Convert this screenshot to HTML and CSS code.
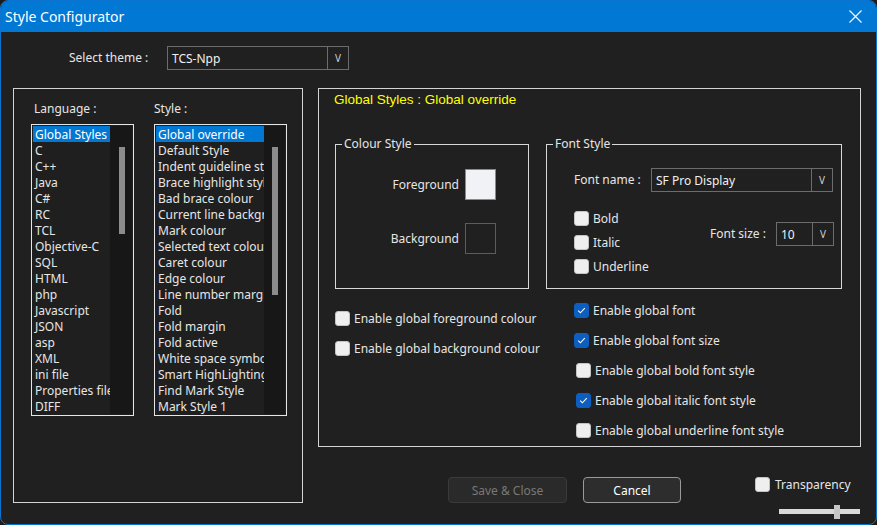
FILE: index.html
```html
<!DOCTYPE html>
<html>
<head>
<meta charset="utf-8">
<title>Style Configurator</title>
<link rel="stylesheet" href="styles.css">
</head>
<body>
<div class="window">
  <div class="titlebar">
    <span class="title">Style Configurator</span>
    <svg class="close" width="13" height="13" viewBox="0 0 13 13"><path d="M0.5 0.5 L12.5 12.5 M12.5 0.5 L0.5 12.5" stroke="#ffffff" stroke-width="1.1" fill="none"/></svg>
  </div>
  <div class="content">
    <div class="theme-row">
      <span class="theme-label">Select theme :</span>
      <div class="combo theme-combo"><span class="combo-text">TCS-Npp</span><span class="combo-arrow">V</span></div>
    </div>
    <div class="main">
      <div class="group-left">
        <div class="list-col">
          <div class="list-label lang-label">Language :</div>
          <div class="listbox lang-list">
            <div class="items">
              <div class="item selected">Global Styles</div>
              <div class="item">C</div>
              <div class="item">C++</div>
              <div class="item">Java</div>
              <div class="item">C#</div>
              <div class="item">RC</div>
              <div class="item">TCL</div>
              <div class="item">Objective-C</div>
              <div class="item">SQL</div>
              <div class="item">HTML</div>
              <div class="item">php</div>
              <div class="item">Javascript</div>
              <div class="item">JSON</div>
              <div class="item">asp</div>
              <div class="item">XML</div>
              <div class="item">ini file</div>
              <div class="item">Properties file</div>
              <div class="item">DIFF</div>
            </div>
            <div class="scroll"><div class="thumb lang-thumb"></div></div>
          </div>
        </div>
        <div class="list-col">
          <div class="list-label">Style :</div>
          <div class="listbox style-list">
            <div class="items">
              <div class="item selected">Global override</div>
              <div class="item">Default Style</div>
              <div class="item">Indent guideline style</div>
              <div class="item">Brace highlight style</div>
              <div class="item">Bad brace colour</div>
              <div class="item">Current line background colour</div>
              <div class="item">Mark colour</div>
              <div class="item">Selected text colour</div>
              <div class="item">Caret colour</div>
              <div class="item">Edge colour</div>
              <div class="item">Line number margin</div>
              <div class="item">Fold</div>
              <div class="item">Fold margin</div>
              <div class="item">Fold active</div>
              <div class="item">White space symbol</div>
              <div class="item">Smart HighLighting</div>
              <div class="item">Find Mark Style</div>
              <div class="item">Mark Style 1</div>
            </div>
            <div class="scroll"><div class="thumb style-thumb"></div></div>
          </div>
        </div>
      </div>
      <div class="right-col">
        <div class="group-right">
          <div class="group-title">Global Styles : Global override</div>
          <div class="fieldsets">
            <fieldset class="fs colour-fs">
              <legend>Colour Style</legend>
              <div class="colour-grid">
                <span class="swatch-label">Foreground</span><span class="swatch fg"></span>
                <span class="swatch-label">Background</span><span class="swatch bg"></span>
              </div>
            </fieldset>
            <fieldset class="fs font-fs">
              <legend>Font Style</legend>
              <div class="font-body">
                <div class="font-name-row">
                  <span class="fn-label">Font name :</span>
                  <div class="combo fn-combo"><span class="combo-text">SF Pro Display</span><span class="combo-arrow">V</span></div>
                </div>
                <div class="font-row2">
                  <div class="checks">
                    <label class="check-row"><span class="cb"></span><span>Bold</span></label>
                    <label class="check-row"><span class="cb"></span><span>Italic</span></label>
                    <label class="check-row"><span class="cb"></span><span>Underline</span></label>
                  </div>
                  <div class="font-size">
                    <span class="fs-label">Font size :</span>
                    <div class="combo fsz-combo"><span class="combo-text">10</span><span class="combo-arrow">V</span></div>
                  </div>
                </div>
              </div>
            </fieldset>
          </div>
          <div class="enables">
            <div class="en-left">
              <label class="en-row"><span class="cb"></span><span>Enable global foreground colour</span></label>
              <label class="en-row"><span class="cb"></span><span>Enable global background colour</span></label>
            </div>
            <div class="en-right">
              <label class="en-row"><span class="cb checked"><svg width="15" height="15" viewBox="0 0 15 15"><path d="M4.2 7.6 L6.4 9.8 L10.8 5.2" stroke="#ffffff" stroke-width="1.1" fill="none"/></svg></span><span>Enable global font</span></label>
              <label class="en-row"><span class="cb checked"><svg width="15" height="15" viewBox="0 0 15 15"><path d="M4.2 7.6 L6.4 9.8 L10.8 5.2" stroke="#ffffff" stroke-width="1.1" fill="none"/></svg></span><span>Enable global font size</span></label>
              <label class="en-row shift"><span class="cb"></span><span>Enable global bold font style</span></label>
              <label class="en-row shift"><span class="cb checked"><svg width="15" height="15" viewBox="0 0 15 15"><path d="M4.2 7.6 L6.4 9.8 L10.8 5.2" stroke="#ffffff" stroke-width="1.1" fill="none"/></svg></span><span>Enable global italic font style</span></label>
              <label class="en-row shift"><span class="cb"></span><span>Enable global underline font style</span></label>
            </div>
          </div>
        </div>
        <div class="bottom-row">
          <button class="btn btn-disabled">Save &amp; Close</button>
          <button class="btn btn-cancel">Cancel</button>
          <div class="transp">
            <label class="transp-row"><span class="cb"></span><span>Transparency</span></label>
            <div class="slider"><div class="track"></div><div class="knob"></div></div>
          </div>
        </div>
      </div>
    </div>
  </div>
</div>
</body>
</html>
```

FILE: styles.css
```css
html, body {
  margin: 0;
  padding: 0;
  background: #1b1b1b;
}
body {
  font-family: "Noto Sans", "Open Sans", sans-serif;
  font-size: 12px;
  color: #e6e6e6;
}
.window {
  width: 877px;
  height: 525px;
  box-sizing: border-box;
  border: 1px solid #0a74d0;
  border-radius: 8px;
  background: #202020;
  overflow: hidden;
}
.titlebar {
  height: 31px;
  background: #0078d4;
  display: flex;
  align-items: center;
  justify-content: space-between;
  padding: 0 14px 0 4px;
}
.title {
  color: #ffffff;
  font-size: 14px;
  line-height: 16px;
}
.close {
  display: block;
  margin-top: -1px;
}
.content {
  padding-top: 14px;
}
.theme-row {
  display: flex;
  align-items: center;
  padding-left: 68px;
  height: 24px;
}
.theme-label {
  width: 98px;
  line-height: 18px;
}
.combo {
  display: flex;
  box-sizing: border-box;
  height: 24px;
  border: 1px solid #6c6c6c;
  background: #202020;
}
.combo-text {
  flex: 1;
  padding-left: 4px;
  line-height: 23px;
  color: #f0f0f0;
  white-space: nowrap;
  overflow: hidden;
}
.combo-arrow {
  width: 20px;
  border-left: 1px solid #6c6c6c;
  text-align: center;
  font-size: 10px;
  line-height: 22px;
  color: #d0d0d0;
}
.theme-combo { width: 182px; }
.main {
  display: flex;
  margin-top: 18px;
  padding-left: 12px;
}
.group-left {
  box-sizing: border-box;
  width: 290px;
  height: 415px;
  border: 1px solid #d4d4d4;
  display: flex;
  gap: 20px;
  padding: 11px 0 0 17px;
}
.list-label {
  line-height: 17px;
  height: 16px;
  margin-bottom: 8px;
}
.lang-label { margin-left: 3px; }
.listbox {
  display: flex;
  box-sizing: border-box;
  height: 292px;
  border: 1px solid #e6e6e6;
  padding: 1px;
  background: #1f1f1f;
}
.items {
  overflow: hidden;
}
.lang-list .items { width: 77px; }
.style-list .items { width: 108px; }
.item {
  height: 16px;
  line-height: 17px;
  padding-left: 2px;
  white-space: nowrap;
  overflow: hidden;
  color: #e6e6e6;
}
.item.selected {
  background: #0078d4;
  color: #ffffff;
}
.scroll {
  background: #171717;
}
.lang-list .scroll { width: 22px; }
.style-list .scroll { width: 21px; }
.thumb {
  width: 6px;
  background: #8c8c8c;
  margin-top: 21px;
}
.lang-thumb { height: 87px; margin-left: 9px; }
.style-thumb { height: 148px; margin-left: 8px; }
.right-col {
  margin-left: 15px;
}
.group-right {
  box-sizing: border-box;
  width: 543px;
  height: 359px;
  border: 1px solid #d4d4d4;
  padding: 3px 0 0 16px;
}
.group-title {
  font-family: "Liberation Sans", Arial, sans-serif;
  font-size: 13.5px;
  line-height: 16px;
  color: #ffff00;
  margin-left: -1px;
}
.fieldsets {
  display: flex;
  gap: 17px;
  margin-top: 28px;
}
.fs {
  margin: 0;
  padding: 0;
  min-width: 0;
  box-sizing: border-box;
  height: 153px;
  border: 1px solid #d8d8d8;
}
.fs legend {
  padding: 0 2px;
  margin-left: 6px;
  line-height: 16px;
  color: #e6e6e6;
}
.colour-fs { width: 194px; }
.font-fs { width: 296px; }
.colour-grid {
  display: grid;
  grid-template-columns: 123px 31px;
  grid-template-rows: 31px 31px;
  column-gap: 6px;
  row-gap: 23px;
  align-items: center;
  padding-top: 17px;
}
.swatch-label {
  justify-self: end;
  line-height: 17px;
}
.swatch {
  box-sizing: border-box;
  width: 31px;
  height: 31px;
}
.swatch.fg {
  background: #f1f2f5;
  border: 1px solid #8a8a8a;
}
.swatch.bg {
  background: #202020;
  border: 1px solid #5c5c5c;
}
.font-body {
  padding: 16px 7px 0 27px;
}
.font-name-row {
  display: flex;
  align-items: center;
}
.fn-label { width: 77px; line-height: 18px; }
.fn-combo { width: 182px; }
.font-row2 {
  display: flex;
  margin-top: 14px;
}
.checks {
  display: flex;
  flex-direction: column;
}
.check-row, .en-row, .transp-row {
  display: flex;
  align-items: center;
  line-height: 17px;
  white-space: nowrap;
}
.check-row { height: 24px; }
.cb {
  box-sizing: border-box;
  width: 15px;
  height: 15px;
  border-radius: 3px;
  background: #efefef;
  border: 1px solid #c4c4c4;
  margin-right: 4px;
  flex: none;
}
.cb.checked {
  background: #0c5fc1;
  border-color: #0c5fc1;
}
.cb.checked svg {
  display: block;
  margin: -1px;
}
.font-size {
  display: flex;
  align-items: center;
  margin-left: auto;
  margin-top: 16px;
  align-self: flex-start;
}
.fs-label { width: 66px; line-height: 18px; }
.fsz-combo { width: 58px; }
.enables {
  display: grid;
  grid-template-columns: 194px 296px;
  column-gap: 17px;
  margin-top: 6px;
}
.en-left { padding-top: 8px; }
.en-right { padding-left: 28px; }
.en-row { height: 30px; }
.en-row.shift { margin-left: 2px; }
.bottom-row {
  display: flex;
  align-items: flex-start;
  margin-top: 30px;
  padding-left: 130px;
}
.btn {
  box-sizing: border-box;
  height: 26px;
  border-radius: 4px;
  font-family: "Noto Sans", "Open Sans", sans-serif;
  font-size: 12px;
  padding: 0;
}
.btn-disabled {
  width: 119px;
  background: #2a2a2a;
  border: 1px solid #3a3a3a;
  color: #787878;
}
.btn-cancel {
  width: 98px;
  margin-left: 16px;
  background: #2d2d2d;
  border: 1px solid #9a9a9a;
  color: #ffffff;
}
.transp {
  margin-left: 74px;
  margin-top: -1px;
}
.transp-row .cb { margin-right: 5px; }
.slider {
  position: relative;
  width: 81px;
  height: 14px;
  margin: 12px 0 0 24px;
}
.track {
  position: absolute;
  left: 0;
  right: 0;
  top: 4px;
  height: 5px;
  background: #d9d9d9;
}
.knob {
  position: absolute;
  left: 55px;
  top: 0;
  width: 6px;
  height: 14px;
  background: #c6c6c6;
}
```
